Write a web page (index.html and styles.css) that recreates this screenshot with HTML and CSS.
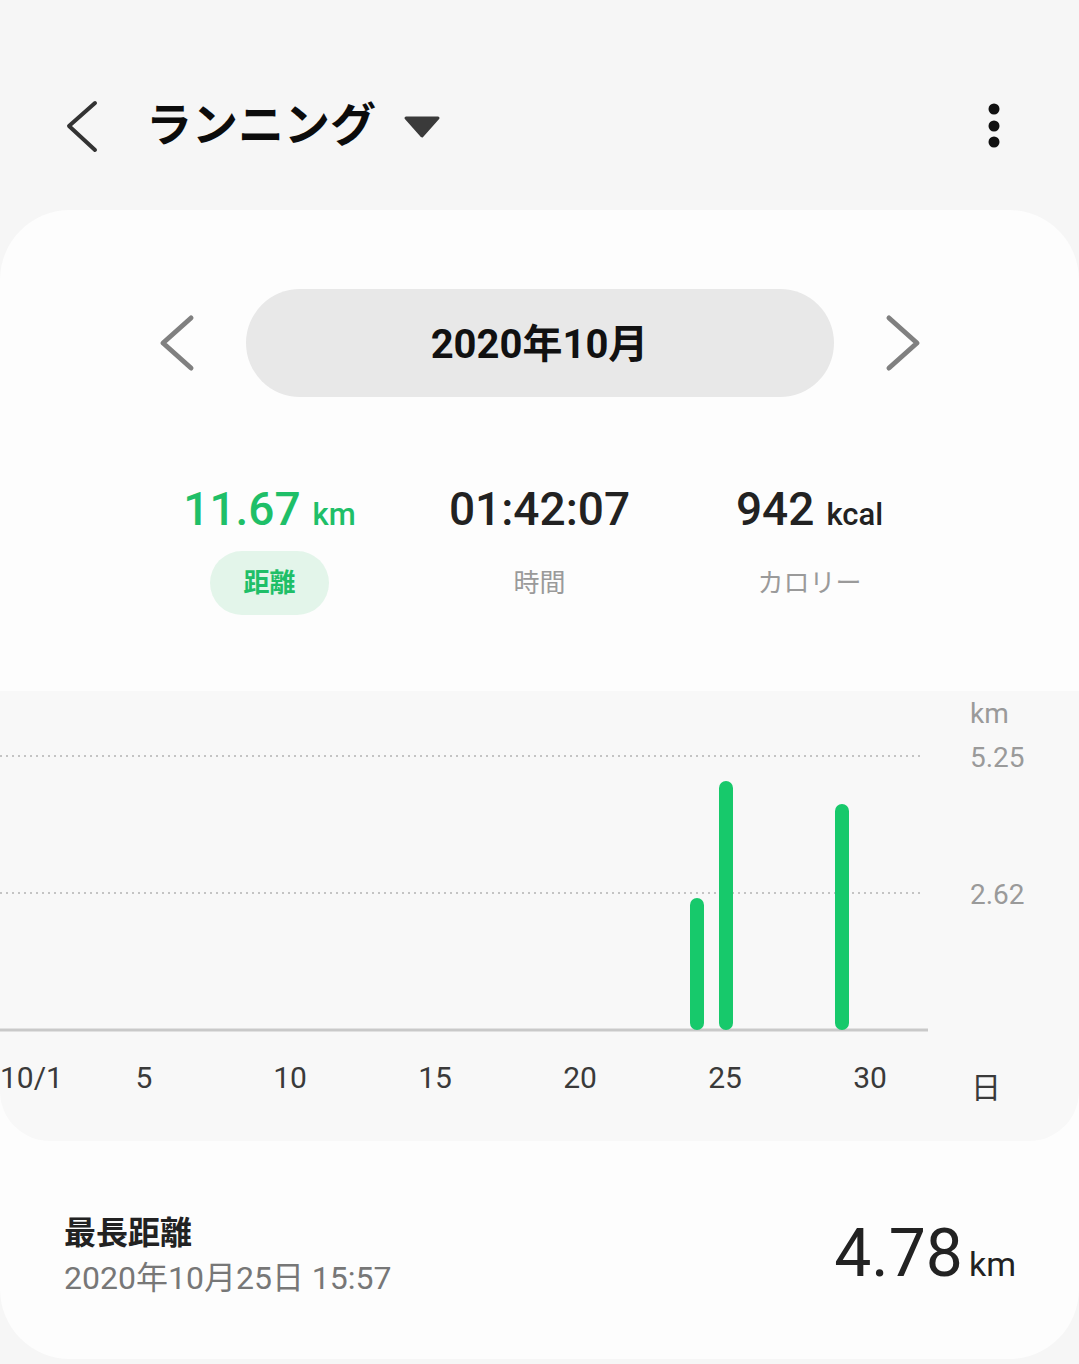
FILE: index.html
```html
<!DOCTYPE html>
<html lang="ja">
<head>
    <meta charset="UTF-8">
    <meta name="viewport" content="width=device-width, initial-scale=1.0">
    <title>ランニング</title>
    <link rel="stylesheet" href="styles.css">
</head>
<body>
    <div class="appbar">
        <svg class="back" width="40" height="60" viewBox="0 0 40 60">
            <path d="M33 8 L7 31 L33 55" fill="none" stroke="#333" stroke-width="4" stroke-linecap="round" stroke-linejoin="round"/>
        </svg>
        <h1 class="title">ランニング</h1>
        <svg class="drop" width="38" height="24" viewBox="0 0 38 24">
            <path d="M3 3 H35 L19 21 Z" fill="#3a3a3a" stroke="#3a3a3a" stroke-width="3" stroke-linejoin="round"/>
        </svg>
        <svg class="more" width="20" height="50" viewBox="0 0 20 50">
            <circle cx="10" cy="8" r="5.5" fill="#111"/>
            <circle cx="10" cy="25" r="5.5" fill="#111"/>
            <circle cx="10" cy="41" r="5.5" fill="#111"/>
        </svg>
    </div>

    <div class="card">
        <div class="month-nav">
            <svg width="40" height="60" viewBox="0 0 40 60">
                <path d="M35 5 L7 30 L35 55" fill="none" stroke="#808080" stroke-width="5" stroke-linecap="round" stroke-linejoin="round"/>
            </svg>
            <div class="month-pill">2020年10月</div>
            <svg width="40" height="60" viewBox="0 0 40 60">
                <path d="M5 5 L33 30 L5 55" fill="none" stroke="#808080" stroke-width="5" stroke-linecap="round" stroke-linejoin="round"/>
            </svg>
        </div>

        <div class="stats">
            <div class="stat active">
                <div class="value">11.67<span class="unit">km</span></div>
                <div class="label">距離</div>
            </div>
            <div class="stat">
                <div class="value">01:42:07</div>
                <div class="label">時間</div>
            </div>
            <div class="stat">
                <div class="value">942<span class="unit">kcal</span></div>
                <div class="label">カロリー</div>
            </div>
        </div>

        <div class="chart">
            <svg width="1079" height="450" viewBox="0 0 1079 450">
                <line x1="0" y1="65" x2="922" y2="65" stroke="#c4c4c4" stroke-width="2" stroke-dasharray="2 4"/>
                <line x1="0" y1="202" x2="922" y2="202" stroke="#c4c4c4" stroke-width="2" stroke-dasharray="2 4"/>
                <line x1="0" y1="339" x2="928" y2="339" stroke="#c9c9c9" stroke-width="3"/>
                <line x1="697" y1="214" x2="697" y2="332" stroke="#17c96b" stroke-width="14" stroke-linecap="round"/>
                <line x1="726" y1="97" x2="726" y2="332" stroke="#17c96b" stroke-width="14" stroke-linecap="round"/>
                <line x1="842" y1="120" x2="842" y2="332" stroke="#17c96b" stroke-width="14" stroke-linecap="round"/>
                <g class="y-label">
                    <text x="970" y="32">km</text>
                    <text x="970" y="76">5.25</text>
                    <text x="970" y="213">2.62</text>
                </g>
                <g class="x-label">
                    <text x="0" y="397">10/1</text>
                    <text x="144" y="397" text-anchor="middle">5</text>
                    <text x="290" y="397" text-anchor="middle">10</text>
                    <text x="435" y="397" text-anchor="middle">15</text>
                    <text x="580" y="397" text-anchor="middle">20</text>
                    <text x="725" y="397" text-anchor="middle">25</text>
                    <text x="870" y="397" text-anchor="middle">30</text>
                    <text x="971" y="407">日</text>
                </g>
            </svg>
        </div>

        <div class="record">
            <div class="record-info">
                <div class="record-title">最長距離</div>
                <div class="record-date">2020年10月25日 15:57</div>
            </div>
            <div class="record-value">4.78<span class="unit">km</span></div>
        </div>
    </div>
</body>
</html>
```

FILE: styles.css
```css
body {
    margin: 0;
    background: #f6f6f6;
    font-family: Roboto, "Noto Sans CJK JP", sans-serif;
    color: #111;
}

.appbar {
    display: flex;
    align-items: center;
    height: 170px;
    padding: 40px 75px 0 62px;
}

.title {
    margin: 0 0 0 44px;
    font-size: 46px;
    font-weight: 700;
    line-height: 60px;
    color: #0c0c0c;
}

.drop {
    margin-left: 27px;
    margin-top: 4px;
}

.more {
    margin-left: auto;
    margin-top: 2px;
}

.card {
    height: 1149px;
    background: #fdfdfd;
    border-radius: 70px;
    overflow: hidden;
}

.month-nav {
    display: flex;
    justify-content: center;
    align-items: center;
    gap: 50px;
    padding-top: 79px;
}

.month-pill {
    width: 588px;
    height: 108px;
    line-height: 112px;
    border-radius: 54px;
    background: #e8e8e8;
    text-align: center;
    font-size: 40px;
    font-weight: 700;
    color: #111;
}

.stats {
    display: grid;
    grid-template-columns: repeat(3, 270px);
    justify-content: center;
    margin-top: 84px;
    text-align: center;
}

.stat {
    display: flex;
    flex-direction: column;
    align-items: center;
}

.value {
    height: 56px;
    font-size: 46px;
    font-weight: 500;
    line-height: 56px;
    color: #222;
}

.value .unit {
    margin-left: 12px;
    font-size: 31px;
}

.label {
    margin-top: 14px;
    padding: 0 33px;
    height: 64px;
    line-height: 64px;
    border-radius: 32px;
    font-size: 26px;
    color: #9a9a9a;
}

.stat.active .value {
    color: #1fbf68;
}

.stat.active .label {
    background: #e3f5ea;
    color: #1fbf68;
    font-weight: 700;
}

.chart {
    margin-top: 76px;
    height: 450px;
    background: #f8f8f8;
    border-radius: 0 0 50px 50px;
}

.chart svg {
    display: block;
}

.y-label {
    font-size: 28px;
    fill: #9a9a9a;
}

.x-label {
    font-size: 30px;
    fill: #3a3a3a;
}

.record {
    display: flex;
    justify-content: space-between;
    align-items: flex-end;
    margin-top: 70px;
    padding: 0 63px 0 64px;
}

.record-title {
    font-size: 32px;
    font-weight: 700;
    line-height: 44px;
    color: #222;
}

.record-date {
    font-size: 32px;
    line-height: 46px;
    color: #777;
}

.record-value {
    font-size: 66px;
    line-height: 80px;
    margin-bottom: -3px;
    color: #222;
}

.record-value .unit {
    margin-left: 6px;
    font-size: 34px;
}
```
